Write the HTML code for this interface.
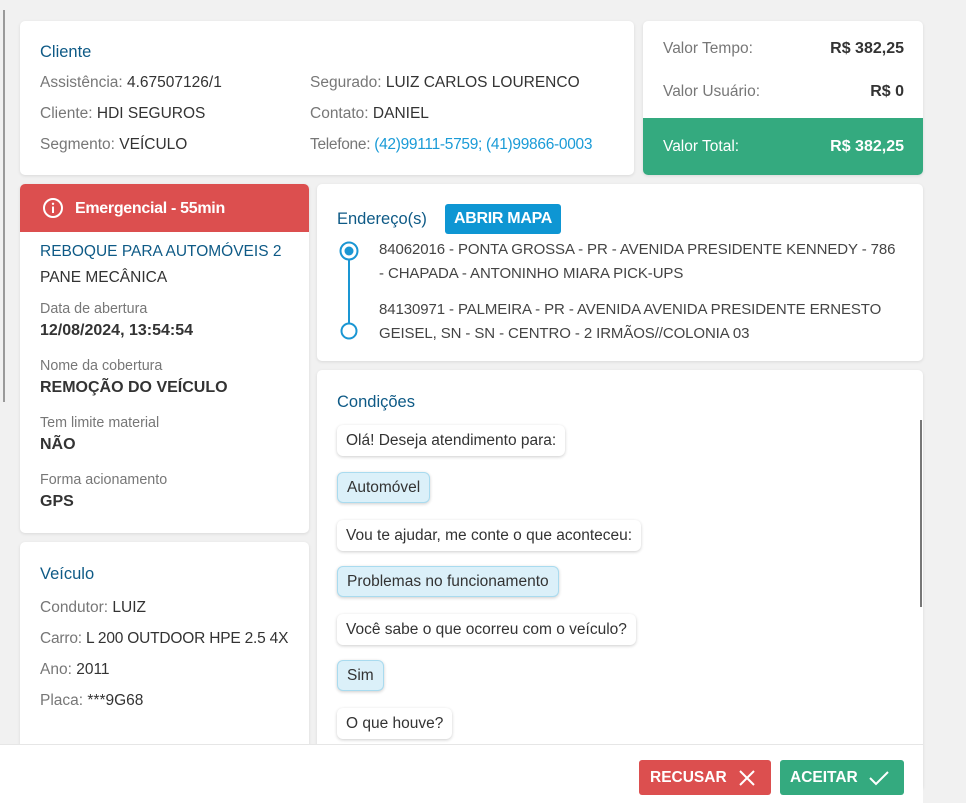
<!DOCTYPE html>
<html><head><meta charset="utf-8"><style>
*{margin:0;padding:0;box-sizing:border-box}
body{width:966px;height:803px;background:#f1f1f1;font-family:"Liberation Sans",sans-serif;font-size:15.5px;color:#333;position:relative;overflow:hidden}
.a{position:absolute;white-space:nowrap}
.card{position:absolute;background:#fff;border-radius:5px;box-shadow:0 1px 3px rgba(0,0,0,.1);overflow:hidden}
.t{color:#0e5a86;font-size:16.5px}
.l{color:#777}
.lab{color:#777;font-size:14.3px}
.v{font-weight:bold;color:#333;font-size:16px}
.b{position:absolute;border-radius:6px;padding:0 9px;height:31px;line-height:31px;font-size:15.5px;white-space:nowrap;box-shadow:0 1px 3px rgba(0,0,0,.2)}
.w{background:#fff}
.c{background:#dbf0f9;border:1px solid #a9dbef;line-height:29px}
</style></head><body>
<div class="a" style="left:3px;top:10px;width:2px;height:392px;background:#9a9a9a"></div>

<div class="card" style="left:20px;top:21px;width:614px;height:154px">
<div class="a t" style="left:20px;top:22px">Cliente</div>
<div class="a" style="left:20px;top:53px"><span class="l">Assistência:</span> 4.67507126/1</div>
<div class="a" style="left:20px;top:84px"><span class="l">Cliente:</span> HDI SEGUROS</div>
<div class="a" style="left:20px;top:115px"><span class="l">Segmento:</span> VEÍCULO</div>
<div class="a" style="left:290px;top:53px"><span class="l">Segurado:</span> LUIZ CARLOS LOURENCO</div>
<div class="a" style="left:290px;top:84px"><span class="l">Contato:</span> DANIEL</div>
<div class="a" style="left:290px;top:115px;letter-spacing:-.3px"><span class="l">Telefone:</span> <span style="color:#1a9bd7">(42)99111-5759; (41)99866-0003</span></div>
</div>

<div class="card" style="left:643px;top:21px;width:280px;height:154px">
<div class="a l" style="left:20px;top:19px">Valor Tempo:</div>
<div class="a v" style="right:19px;top:19px">R$ 382,25</div>
<div class="a l" style="left:20px;top:62px">Valor Usuário:</div>
<div class="a v" style="right:19px;top:62px">R$ 0</div>
<div class="a" style="left:0;top:97px;width:280px;height:57px;background:#34aa7f"></div>
<div class="a" style="left:20px;top:117px;color:#fff">Valor Total:</div>
<div class="a v" style="right:19px;top:117px;color:#fff">R$ 382,25</div>
</div>

<div class="card" style="left:20px;top:184px;width:289px;height:349px">
<div class="a" style="left:0;top:0;width:289px;height:48px;background:#dc4f4f"></div>
<svg class="a" style="left:22px;top:13px" width="22" height="22" viewBox="0 0 22 22"><circle cx="11" cy="11" r="9" fill="none" stroke="#fff" stroke-width="2"/><rect x="10" y="9.5" width="2" height="6.5" fill="#fff"/><circle cx="11" cy="6.8" r="1.2" fill="#fff"/></svg>
<div class="a" style="left:55px;top:16px;color:#fff;font-weight:bold;font-size:16px;letter-spacing:-.3px">Emergencial - 55min</div>
<div class="a t" style="left:20px;top:59px;font-size:15.5px">REBOQUE PARA AUTOMÓVEIS 2</div>
<div class="a" style="left:20px;top:85px">PANE MECÂNICA</div>
<div class="a lab" style="left:20px;top:117px">Data de abertura</div>
<div class="a v" style="left:20px;top:138px">12/08/2024, 13:54:54</div>
<div class="a lab" style="left:20px;top:174px">Nome da cobertura</div>
<div class="a v" style="left:20px;top:195px">REMOÇÃO DO VEÍCULO</div>
<div class="a lab" style="left:20px;top:231px">Tem limite material</div>
<div class="a v" style="left:20px;top:252px">NÃO</div>
<div class="a lab" style="left:20px;top:288px">Forma acionamento</div>
<div class="a v" style="left:20px;top:309px">GPS</div>
</div>

<div class="card" style="left:20px;top:542px;width:289px;height:240px">
<div class="a t" style="left:20px;top:23px">Veículo</div>
<div class="a" style="left:20px;top:57px"><span class="l">Condutor:</span> LUIZ</div>
<div class="a" style="left:20px;top:88px;letter-spacing:-.2px"><span class="l">Carro:</span> L 200 OUTDOOR HPE 2.5 4X</div>
<div class="a" style="left:20px;top:119px"><span class="l">Ano:</span> 2011</div>
<div class="a" style="left:20px;top:150px"><span class="l">Placa:</span> ***9G68</div>
</div>

<div class="card" style="left:317px;top:184px;width:606px;height:177px">
<div class="a t" style="left:20px;top:26px">Endereço(s)</div>
<div class="a" style="left:128px;top:20px;background:#0e96d3;color:#fff;font-weight:bold;border-radius:3px;height:30px;line-height:30px;padding:0 9px;font-size:16px;letter-spacing:-.3px">ABRIR MAPA</div>
<svg class="a" style="left:21px;top:55px" width="22" height="104"><line x1="11" y1="12" x2="11" y2="88" stroke="#1a96d3" stroke-width="2"/><circle cx="11" cy="12" r="8.5" fill="#fff" stroke="#1a96d3" stroke-width="2"/><circle cx="11" cy="12" r="4.5" fill="#1a96d3"/><circle cx="11" cy="92" r="7.5" fill="#fff" stroke="#1a96d3" stroke-width="2"/></svg>
<div class="a" style="left:62px;top:54px;line-height:24px;font-size:15px;letter-spacing:-.1px;color:#444">84062016 - PONTA GROSSA - PR - AVENIDA PRESIDENTE KENNEDY - 786<br>- CHAPADA - ANTONINHO MIARA PICK-UPS</div>
<div class="a" style="left:62px;top:114px;line-height:24px;font-size:15px;letter-spacing:-.1px;color:#444">84130971 - PALMEIRA - PR - AVENIDA AVENIDA PRESIDENTE ERNESTO<br>GEISEL, SN - SN - CENTRO - 2 IRMÃOS//COLONIA 03</div>
</div>

<div class="card" style="left:317px;top:370px;width:606px;height:420px">
<div class="a t" style="left:20px;top:23px">Condições</div>
<div class="b w" style="left:20px;top:55px">Olá! Deseja atendimento para:</div>
<div class="b c" style="left:20px;top:102px">Automóvel</div>
<div class="b w" style="left:20px;top:150px">Vou te ajudar, me conte o que aconteceu:</div>
<div class="b c" style="left:20px;top:196px">Problemas no funcionamento</div>
<div class="b w" style="left:20px;top:244px">Você sabe o que ocorreu com o veículo?</div>
<div class="b c" style="left:20px;top:290px">Sim</div>
<div class="b w" style="left:20px;top:338px">O que houve?</div>
<div class="a" style="left:603px;top:50px;width:2px;height:187px;background:#777"></div>
</div>

<div class="a" style="left:0;top:744px;width:923px;height:59px;background:#fff;border-top:1px solid #e6e6e6"></div>
<div class="a" style="left:639px;top:760px;width:132px;height:35px;background:#dc4f4f;border-radius:3px;color:#fff;font-weight:bold;font-size:15.5px;line-height:35px;padding-left:11px">RECUSAR
<svg style="position:absolute;left:100px;top:10px" width="16" height="16"><path d="M1 1L15 15M15 1L1 15" stroke="#fff" stroke-width="2"/></svg></div>
<div class="a" style="left:780px;top:760px;width:124px;height:35px;background:#34aa7f;border-radius:3px;color:#fff;font-weight:bold;font-size:15.5px;line-height:35px;padding-left:10px">ACEITAR
<svg style="position:absolute;left:89px;top:10px" width="20" height="16"><path d="M1 8L7 14L19 2" stroke="#fff" stroke-width="2" fill="none"/></svg></div>
</body></html>
